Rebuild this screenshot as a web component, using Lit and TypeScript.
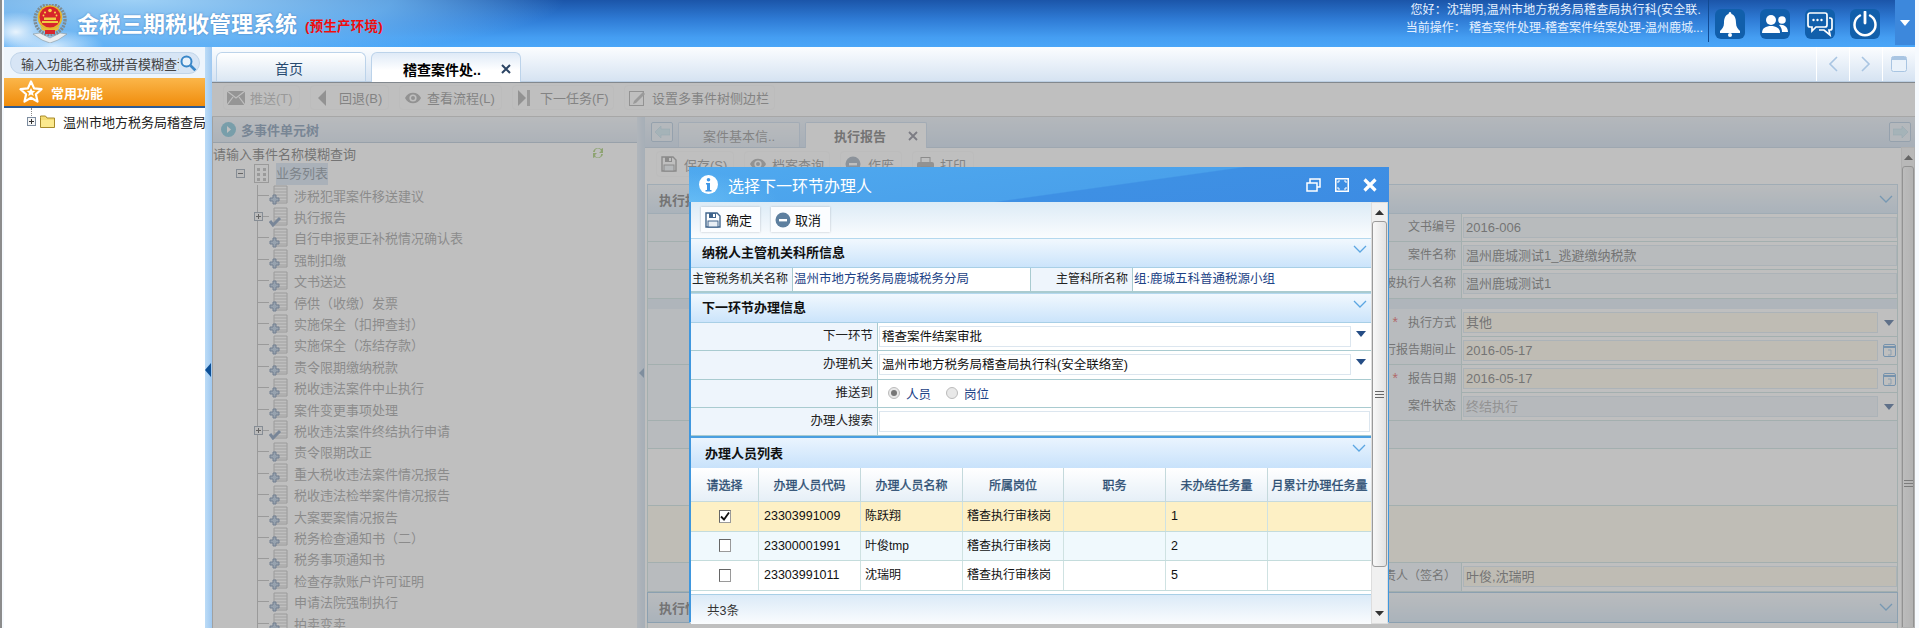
import { LitElement, html, css, svg } from "lit";
import { customElement } from "lit/decorators.js";

const treeItems: [string, boolean][] = [
  ["涉税犯罪案件移送建议", false],
  ["执行报告", true],
  ["自行申报更正补税情况确认表", false],
  ["强制扣缴", false],
  ["文书送达", false],
  ["停供（收缴）发票", false],
  ["实施保全（扣押查封）", false],
  ["实施保全（冻结存款）", false],
  ["责令限期缴纳税款", false],
  ["税收违法案件中止执行", false],
  ["案件变更事项处理", false],
  ["税收违法案件终结执行申请", true],
  ["责令限期改正", false],
  ["重大税收违法案件情况报告", false],
  ["税收违法检举案件情况报告", false],
  ["大案要案情况报告", false],
  ["税务检查通知书（二）", false],
  ["税务事项通知书", false],
  ["检查存款账户许可证明", false],
  ["申请法院强制执行", false],
  ["拍卖变卖", false],
];

const people = [
  ["23303991009", "陈跃翔", "稽查执行审核岗", "1", "sel"],
  ["23300001991", "叶俊tmp", "稽查执行审核岗", "2", "alt"],
  ["23303991011", "沈瑞明", "稽查执行审核岗", "5", ""],
];

const heads = ["请选择", "办理人员代码", "办理人员名称", "所属岗位", "职务", "未办结任务量", "月累计办理任务量"];

const chevron = (c = "#5ba6e2") => html`<svg class="chev" width="14" height="8" viewBox="0 0 14 8"><path d="M1 1l6 6 6-6" fill="none" stroke="${c}" stroke-width="1.3"/></svg>`;
const floppy = (c = "#41658c", s = 16) => html`<svg width="${s}" height="${s}" viewBox="0 0 16 16"><path d="M1 1h11l3 3v11H1z" fill="#fff" stroke="${c}" stroke-width="1.4"/><rect x="4" y="1" width="7" height="5" fill="${c}"/><rect x="8" y="2" width="2" height="3" fill="#fff"/><rect x="3" y="9" width="10" height="6" fill="#e8eef4" stroke="${c}"/></svg>`;
const minusCircle = (s = 16, c = "#5d7f9f") => html`<svg width="${s}" height="${s}" viewBox="0 0 16 16"><circle cx="8" cy="8" r="7.5" fill="${c}"/><rect x="4" y="7" width="8" height="2.4" fill="#fff"/></svg>`;
const eye = html`<svg width="18" height="14" viewBox="0 0 18 14"><path d="M1 7c3-7 13-7 16 0-3 7-13 7-16 0z" fill="#999"/><circle cx="9" cy="7" r="3.6" fill="#fff"/><circle cx="9" cy="7" r="2" fill="#999"/></svg>`;
const docIcon = (check: boolean) => html`<svg class="doc" width="20" height="20" viewBox="0 0 20 20">
  <path d="M5 1h13v17H5z" fill="#fff" stroke="#aaa"/>
  <path d="M5 4h13M5 7h13M5 10h13M5 13h13M5 16h13" stroke="#bbb"/>
  ${check
    ? svg`<path d="M1 14l3 4 7-7" fill="none" stroke="#5f7ea6" stroke-width="3"/>`
    : svg`<path d="M4 10h3v3h3v3H7v3H4v-3H1v-3h3z" fill="#a5bdd8" stroke="#4f6d94"/>`}
</svg>`;
const expander = (minus = false) => html`<svg width="9" height="9" viewBox="0 0 9 9"><rect x=".5" y=".5" width="8" height="8" fill="#f6f6f6" stroke="#7d8da0"/><path d="M2 4.500h5${minus ? "" : "M4.500 2v5"}" stroke="#333"/></svg>`;
const arrowBtn = (dir: "up" | "down") => html`<div class="sb-arrow"><svg width="9" height="5" viewBox="0 0 9 5"><path d="${dir === "up" ? "M0 5l4.500-5L9 5z" : "M0 0l4.500 5L9 0z"}" fill="#333"/></svg></div>`;
const grip = html`<svg width="9" height="7" viewBox="0 0 9 7"><path d="M0 .5h9M0 3.500h9M0 6.500h9" stroke="#666"/></svg>`;
const ddArrow = html`<svg width="10" height="6" viewBox="0 0 10 6"><path d="M0 0h10L5 6z" fill="#254d85"/></svg>`;
const calIcon = html`<svg width="13" height="14" viewBox="0 0 13 14"><rect x=".5" y="1.500" width="12" height="12" rx="1.500" fill="#fff" stroke="#5b9bd5"/><path d="M1 4h11" stroke="#5b9bd5" stroke-width="2"/><path d="M5 7h3v5H5" fill="none" stroke="#8fbbe0"/></svg>`;

const emblem = html`<svg width="36" height="39" viewBox="0 0 36 39">
  <path d="M1 30l7-1 10 5 10-5 7 1-9 6-8 3-8-3z" fill="#e8edf0" stroke="#8a979e" stroke-width=".6"/>
  <circle cx="18" cy="15.500" r="15" fill="none" stroke="#7f8b8f" stroke-width="3.400" stroke-dasharray="2 1"/>
  <circle cx="18" cy="13.500" r="12.300" fill="#e4b62c"/>
  <circle cx="18" cy="13" r="10.500" fill="#d7262b"/>
  <g fill="#f8d84a"><circle cx="18" cy="6.500" r="1.800"/><circle cx="13" cy="8.500" r="1"/><circle cx="23" cy="8.500" r="1"/><circle cx="11.500" cy="11.500" r=".9"/><circle cx="24.500" cy="11.500" r=".9"/></g>
  <path d="M10 17h16v2H10zM12 13.500h12v2.500H12z" fill="#f1cc45"/>
  <path d="M8 22c5 4 15 4 20 0l-2 4c-5 2-11 2-16 0z" fill="#e9bd33"/>
  <path d="M13 26h10v4H13z" fill="#d7262b"/>
</svg>`;

const star = html`<svg width="24" height="24" viewBox="0 0 24 24"><path d="M12 1.500l3.100 6.900 7.400.8-5.600 5 1.600 7.400L12 17.800l-6.500 3.800 1.600-7.400-5.600-5 7.400-.8z" fill="#f6a01e" stroke="#fff" stroke-width="2.200" stroke-linejoin="round"/><path d="M12 8l1.300 2.800 3 .3-2.300 2 .7 3L12 14.600 9.300 16l.7-3-2.300-2 3-.3z" fill="#fff"/></svg>`;
const folder = html`<svg width="15" height="13" viewBox="0 0 15 13"><path d="M.5 2.500V1h5l1.500 2h7.500v9.500h-14z" fill="#f5dc72" stroke="#a78a2a"/><path d="M1 5h13v7H1z" fill="#fbe98e"/></svg>`;
const search = html`<svg width="17" height="17" viewBox="0 0 17 17"><circle cx="6.500" cy="6.500" r="5" fill="#e8f1fa" stroke="#3a87c8" stroke-width="2"/><path d="M10.500 10.500l5 5" stroke="#3a87c8" stroke-width="2.600"/></svg>`;

const topIcons = [
  html`<svg width="22" height="26" viewBox="0 0 22 26"><path d="M11 1c1 0 1.400 1 1.400 2C16 4 17 8 17 12c0 4 2 6 4 8v2H1v-2c2-2 4-4 4-8 0-4 1-8 4.600-9C9.600 2 10 1 11 1z" fill="#fff"/><circle cx="11" cy="24" r="2" fill="#fff"/></svg>`,
  html`<svg width="26" height="20" viewBox="0 0 26 20"><circle cx="9" cy="6" r="5" fill="#fff"/><path d="M0 19c0-5 4-7 9-7s9 2 9 7z" fill="#fff"/><circle cx="20" cy="6" r="3.800" fill="#fff"/><path d="M17 11c5-1 9 2 9 7h-6c0-3-1-5-3-7z" fill="#fff"/></svg>`,
  html`<svg width="26" height="25" viewBox="0 0 26 25"><path d="M3 1h15a2 2 0 012 2v10a2 2 0 01-2 2H9l-4 4v-4H3a2 2 0 01-2-2V3a2 2 0 012-2z" fill="#115fab" stroke="#fff" stroke-width="1.700"/><path d="M22 6h1a2 2 0 012 2v8a2 2 0 01-2 2h-1l1 5-6-5h-5" fill="none" stroke="#fff" stroke-width="1.700"/><circle cx="6.500" cy="8" r="1.200" fill="#fff"/><circle cx="10.500" cy="8" r="1.200" fill="#fff"/><circle cx="14.500" cy="8" r="1.200" fill="#fff"/></svg>`,
  html`<svg width="26" height="26" viewBox="0 0 26 26"><path d="M8 4.500a10.500 10.500 0 1010 0" fill="none" stroke="#fff" stroke-width="2.500" stroke-linecap="round"/><path d="M13 1v11" stroke="#fff" stroke-width="2.800" stroke-linecap="round"/></svg>`,
];

const toolbarBtns = [
  [html`<svg width="18" height="14" viewBox="0 0 18 14"><rect width="18" height="14" fill="#a0a0a0"/><path d="M0 0l9 7 9-7M0 14l6-8M18 14l-6-8" fill="none" stroke="#fff" stroke-width="1.200"/></svg>`, "推送(T)", "b1"],
  [html`<svg width="12" height="16" viewBox="0 0 12 16"><path d="M10 0v16L2 8z" fill="#999"/></svg>`, "回退(B)", "b2"],
  [eye, "查看流程(L)", "b3"],
  [html`<svg width="14" height="16" viewBox="0 0 14 16"><path d="M1 0l8 8-8 8z" fill="#999"/><rect x="10" width="3" height="16" fill="#aaa"/></svg>`, "下一任务(F)", "b4"],
  [html`<svg width="18" height="16" viewBox="0 0 18 16"><rect x=".5" y="1.500" width="14" height="14" fill="#fff" stroke="#999"/><path d="M5 11l9-9 2 2-9 9-3 1z" fill="#aaa"/></svg>`, "设置多事件树侧边栏", "b5"],
];

@customElement("app-root")
export class AppRoot extends LitElement {
  static styles = css`
    :host {
      display: block;
      width: 1919px;
      height: 628px;
      overflow: hidden;
      font-family: "Liberation Sans", "Noto Sans CJK SC", sans-serif;
      font-size: 12px;
      color: #222;
      background: #f6fafe;
    }
    * { box-sizing: border-box; }
    .page {
      height: 628px;
      padding: 0 4px 0 4px;
      border-left: 2px solid #8c8c8c;
      display: flex;
      flex-direction: column;
    }
    .page > * { margin-left: -2px; }
    /* header */
    .header {
      height: 47px;
      flex: none;
      display: flex;
      align-items: stretch;
      color: #fff;
      background:
        radial-gradient(ellipse 34px 20px at 12px 32px, rgba(255,255,255,.85), transparent),
        radial-gradient(ellipse 50px 16px at 50px 46px, rgba(255,255,255,.7), transparent),
        radial-gradient(ellipse 430px 62px at 130px 0px, rgba(165,215,250,.95) 0, rgba(120,190,245,.75) 60%, transparent 100%),
        linear-gradient(#1b55a9 0, #2e7ad4 40%, #459ef2 80%, #4aa6f8 100%);
    }
    .emblem { margin: 4px 9px 0 28px; flex: none; }
    .title { font-size: 22px; font-weight: 700; line-height: 47px; margin-top: 1px; text-shadow: 0 0 2px rgba(20,70,140,.5); white-space: nowrap; }
    .env { font-size: 13.500px; color: #f10d0d; margin-left: 8px; line-height: 47px; margin-top: 3px; letter-spacing: .2px; font-weight: 700; }
    .user { margin-left: auto; text-align: right; padding: 0 5px 0 0; line-height: 18px; color: #e6f1ff; white-space: nowrap; font-size: 12px; }
    .user div:first-child { padding-top: 1px; letter-spacing: .15px; margin-right: 2px; }
    .user-sep { width: 1px; height: 42px; background: #114a92; margin-right: 6px; flex: none; }
    .ticons { display: flex; gap: 15px; padding-top: 9px; margin-right: 15px; }
    .ticon { width: 30px; height: 30px; border-radius: 6px; background: #115fab; display: flex; align-items: center; justify-content: center; }
    .tdrop { width: 20px; height: 45px; background: #3d88dc; display: flex; align-items: center; justify-content: center; }
    /* body */
    .main { flex: 1; display: flex; min-height: 0; }
    .side { width: 201px; flex: none; background: #fff; }
    .search-wrap { height: 31px; padding: 5px 5px 4px 6px; background: #eef5fc; }
    .search {
      height: 22px; border-radius: 11px; background: #d7e5f5; border: 1px solid #c1d5ea;
      display: flex; align-items: center; padding-left: 10px; overflow: hidden;
      font-size: 13px; color: #444; white-space: nowrap;
    }
    .search span { width: 158px; overflow: hidden; flex: none; }
    .search svg { flex: none; margin-left: 1px; }
    .common {
      height: 30px; background: linear-gradient(#fbb64a, #f08c0c); border-bottom: 2px solid #2e5b94;
      display: flex; align-items: center; padding-left: 15px; color: #fff; font-weight: 700; font-size: 13px;
    }
    .common svg { margin-right: 8px; }
    .stree { display: flex; align-items: center; padding: 0 0 0 23px; white-space: nowrap; overflow: hidden; font-size: 13px; height: 26px; }
    .stree .vline { align-self: flex-start; height: 8px; border-left: 1px dotted #888; margin-left: 4px; margin-right: -1px; }
    .stree .ex { margin-left: -4px; margin-right: 4px; display: flex; }
    .stree .fd { margin-right: 8px; display: flex; }
    .strip { width: 7px; flex: none; background: linear-gradient(90deg, #bcdcf7, #9fc8f0); display: flex; align-items: center; }
    .strip svg { margin-top: 64px; }
    .content { flex: 1; min-width: 0; display: flex; flex-direction: column; }
    /* tabs */
    .tabs {
      height: 35px; flex: none; display: flex; align-items: flex-end; padding-left: 4px; gap: 5px;
      background: linear-gradient(#fbfdff, #d6e3f2);
      border-bottom: 1px solid #bccfe3;
    }
    .tab {
      width: 150px; height: 29px; border: 1px solid #bcd3ea; border-bottom: 0; border-radius: 6px 6px 0 0;
      display: flex; align-items: center; justify-content: center; font-size: 14px; color: #274a70;
      background: linear-gradient(#fff, #dbe7f3); padding: 2px 4px 0 0;
    }
    .tab.on { background: linear-gradient(#dfeaf7, #fff 60%); color: #000; font-weight: 700; justify-content: flex-start; padding-left: 31px; height: 30px; margin-bottom: -1px; }
    .tab.on svg { margin-left: 20px; }
    .tab-tools { margin-left: auto; display: flex; height: 100%; }
    .tt { width: 33px; border-left: 1px solid #fff; display: flex; align-items: center; justify-content: center; }
    /* workspace */
    .work { position: relative; flex: 1; min-height: 0; display: flex; flex-direction: column; background: #fff; overflow: hidden; }
    .mask { position: absolute; inset: 0; background: rgba(140,140,140,.56); border-top: 1px solid rgba(90,100,110,.6); }
    .mtool { height: 35px; flex: none; display: flex; align-items: flex-start; padding: 4px 0 0 12px; gap: 12px; background: #fff; border-bottom: 1px solid #c8c8c8; }
    .btn { height: 23px; display: flex; align-items: center; padding-left: 3px; font-size: 13px; color: #777; border-radius: 3px; box-shadow: 0 0 2px rgba(120,120,120,.2); white-space: nowrap; flex: none; }
    .btn .ic { width: 23px; flex: none; display: flex; align-items: center; }
    .btn.b1 { width: 75px; color: #aaa; }
    .btn.b2 { width: 77px; padding-left: 5px; }
    .btn.b3 { width: 101px; padding-left: 4px; }
    .btn.b4 { width: 100px; padding-left: 4px; }
    .btn.b5 { width: 149px; padding-left: 4px; }
    .split { flex: 1; min-height: 0; display: flex; }
    .tp { width: 425px; flex: none; border-left: 1px solid #bbb; background: #fff; overflow: hidden; }
    .tp-head { height: 26px; background: linear-gradient(#f0f5fb, #d6e2f0); border-bottom: 1px solid #a7bbd0; display: flex; align-items: center; padding-left: 8px; gap: 5px; font-weight: 700; font-size: 13px; color: #5f7da0; }
    .tp-search { height: 20.500px; display: flex; align-items: center; font-size: 13px; color: #555; padding-right: 32px; justify-content: space-between; }
    .root-row { height: 20px; display: flex; align-items: center; padding-left: 23px; font-size: 13px; color: #777; }
    .root-row .rb { margin-right: 9px; display: flex; }
    .root-row .ri { margin-right: 7px; display: flex; }
    .root-row .sel { background: #cfe0f2; height: 22px; line-height: 22px; width: 52px; color: #6a7684; flex: none; }
    .tlist { margin: 1px 0 0 44px; border-left: 1px solid #aaa; }
    .ti { height: 21.400px; display: flex; align-items: center; font-size: 13px; color: #8a8a8a; white-space: nowrap; }
    .ti .conn { width: 11px; height: 1px; background: #aaa; display: flex; align-items: center; flex: none; }
    .ti .conn svg { margin-left: -4px; flex: none; }
    .ti .doc { margin-right: 5px; flex: none; }
    .splitter { width: 8px; flex: none; background: linear-gradient(90deg, #dde9f6, #c6d9ec); display: flex; align-items: center; justify-content: center; }
    .rp { flex: 1; min-width: 0; display: flex; flex-direction: column; background: #fff; }
    .rtabs { height: 31px; flex: none; display: flex; align-items: flex-end; gap: 5px; padding-left: 6px; background: linear-gradient(#e6eef7, #c8daee); border-bottom: 1px solid #b5c8dc; padding-right: 4px; }
    .back { width: 22px; height: 20px; border: 1px solid #9fbcd6; border-radius: 2px; margin-bottom: 5px; background: #e7f0f8; display: flex; align-items: center; justify-content: center; flex: none; }
    .back.fwd { margin-left: auto; }
    .rtab { width: 122px; height: 25px; border: 1px solid #bdd2e8; border-bottom: 0; border-radius: 2px 2px 0 0; background: linear-gradient(#f0f5fa, #d9e5f2); display: flex; align-items: center; justify-content: center; font-size: 13px; color: #777; }
    .rtab.on { background: #fff; height: 26px; margin-bottom: -1px; font-weight: 700; color: #555; gap: 22px; padding-left: 28px; justify-content: flex-start; }
    .rbody { flex: 1; min-height: 0; display: grid; grid-template-columns: 1fr 14px; column-gap: 3px; padding-left: 2px; }
    .rmain { min-width: 0; overflow: hidden; }
    .stool { height: 36px; display: flex; align-items: flex-start; gap: 12px; padding: 4px 0 0 10px; }
    .stool .btn { height: 24px; padding-left: 4px; }
    .stool .s1 { width: 76px; }
    .stool .s2 { width: 84px; }
    .stool .s3 { width: 60px; }
    .stool .s4 { width: 60px; }
    .fsec { height: 30px; border: 1px solid #b8d3e8; background: linear-gradient(#f2f7fc, #cfe3f5); display: flex; align-items: center; justify-content: space-between; padding: 0 4px 0 11px; font-weight: 700; font-size: 13px; color: #555; }
    .frow { height: 28.200px; display: grid; grid-template-columns: 814px 1fr; border: 1px solid #c0dadb; border-top: 0; background: #fff; }
    .frow .l { background: #eef5fc; border-right: 1px solid #c0dadb; text-align: right; padding-right: 5px; line-height: 27px; font-size: 12px; color: #555; white-space: nowrap; }
    .frow .v { padding: 3px 0 3px 1px; display: flex; align-items: center; gap: 3px; }
    .frow .box { flex: 1; height: 21px; line-height: 20px; padding-left: 2px; font-size: 13px; color: #555; background: #eef5fa; border: 1px solid #d4e4ee; white-space: nowrap; }
    .frow .box.req { background: #fff9e6; }
    .frow .box.dim { color: #9a9a9a; background: #eaf1f8; }
    .frow .tool { width: 16px; flex: none; display: flex; align-items: center; justify-content: center; }
    .req-star { color: #e13a3a; margin-right: 10px; font-size: 14px; }
    .band { height: 10px; background: #dbe8f5; border-left: 1px solid #c0dadb; border-right: 1px solid #c0dadb; }
    .fblank { border: 1px solid #c0dadb; border-top: 0; background: #eef5fc; height: 28px; }
    .fblank.t { height: 57px; background: #fff; }
    .fblank.tan { height: 57px; background: #fffaeb; }
    .fsec.second { height: 31px; border: 1px solid #8ab8de; }
    .sb { background: #f0f0f0; border: 1px solid #ddd; display: flex; flex-direction: column; min-height: 0; overflow: hidden; }
    .sb-arrow { height: 18px; flex: none; display: flex; align-items: center; justify-content: center; }
    .sb-thumb { background: linear-gradient(90deg, #f8f8f8, #e2e2e2); border: 1px solid #9a9a9a; border-radius: 3px; display: flex; align-items: center; justify-content: center; flex: none; }
    .sb-fill { flex: 1; }
    .sb.big .sb-thumb { height: 634px; }
    .sb.big { margin-top: -1px; }
    .sb.dlg .sb-thumb { height: 346px; }
    /* dialog */
    .dialog {
      position: absolute; left: 477px; top: 85px; width: 700px; height: 456px;
      display: flex; flex-direction: column; background: #fff;
      border-left: 2px solid #3f97de; border-right: 1px solid #3f97de;
      border-bottom: 1px solid #eef5fb;
    }
    .d-title {
      height: 35px; flex: none; margin: 0 -1px 0 -2px; display: flex; align-items: center; color: #fff;
      padding-left: 10px;
      background:
        radial-gradient(ellipse 90px 30px at 0 100%, rgba(120,205,250,.55), transparent),
        linear-gradient(172deg, #4fa9ef 0, #4aa1eb 58%, #3e90e4 59%, #3d8ce3 100%);
      font-size: 16px;
    }
    .d-title .t { margin-left: 10px; }
    .d-tools { margin-left: auto; display: flex; align-items: center; gap: 14px; padding-right: 12px; }
    .d-body { flex: 1; min-height: 0; display: grid; grid-template-columns: 680px 1fr; }
    .d-main { min-width: 0; }
    .d-tool { height: 36px; background: linear-gradient(#dcebf6, #fafcfe); display: flex; gap: 11px; padding: 5px 0 0 10px; }
    .d-btn { width: 59px; height: 25px; background: #fbfdff; box-shadow: 0 0 2px rgba(110,120,130,.45); display: flex; align-items: center; gap: 5px; padding-left: 4px; font-size: 13px; color: #111; }
    .d-btn.c { gap: 4px; }
    .d-sec { height: 30px; border-top: 1px solid #b4d8ee; border-bottom: 1px solid #a8cfe6; background: linear-gradient(#f1f8fe, #cbe4fb); display: flex; align-items: center; justify-content: space-between; padding: 0 4px 3px 11px; font-weight: 700; font-size: 13px; color: #111; }
    .d-sec .chev { margin-top: -6px; }
    .d-row1 { height: 25px; display: grid; grid-template-columns: 102px 238px 102px 1fr; border-bottom: 2px solid #a9cbd0; font-size: 12px; }
    .d-row1 div { border-right: 1px solid #a9cbd0; line-height: 23px; white-space: nowrap; overflow: hidden; }
    .d-row1 div:last-child { border-right: 0; }
    .d-row1 .l { background: #eef5fc; text-align: right; padding-right: 4px; color: #222; }
    .d-row1 .v { color: #1c4286; padding-left: 1px; font-size: 12.500px; }
    .d-row { height: 28.300px; display: grid; grid-template-columns: 187px 1fr; border-bottom: 1px solid #a9cbd0; }
    .d-row .l { background: #eef5fc; border-right: 1px solid #a9cbd0; text-align: right; padding-right: 4px; line-height: 27px; font-size: 12.500px; color: #222; }
    .d-row .v { padding: 3px 1px; display: flex; align-items: center; }
    .d-row .inp { flex: 1; height: 21px; line-height: 20px; border: 1px solid #dce6ef; padding-left: 2px; font-size: 12.500px; color: #111; background: #fff; }
    .d-row .dd { width: 19px; flex: none; display: flex; justify-content: center; margin-top: -6px; }
    .radios { display: flex; align-items: center; gap: 6px; padding-left: 9px; color: #1c4286; font-size: 12.500px; }
    .radios .gap { margin-left: 9px; }
    .radio { width: 12px; height: 12px; border-radius: 50%; background: #e8e8e8; border: 1px solid #bbb; display: flex; align-items: center; justify-content: center; flex: none; }
    .radio i { width: 6px; height: 6px; border-radius: 50%; background: #777; }
    .list-sec { height: 32px; border-top: 2px solid #4a9fe0; background: linear-gradient(#eaf4fe, #c8e2fb); display: flex; align-items: center; justify-content: space-between; padding: 0 5px 2px 14px; font-weight: 700; font-size: 13px; color: #111; }
    .list-sec .chev { margin-top: -8px; }
    .grid-head, .grid-row { display: grid; grid-template-columns: 68px 102px 102px 101px 102px 102px 103px; }
    .grid-head { height: 34px; background: linear-gradient(#fff, #e6eff7); border-bottom: 1px solid #c6dadd; }
    .grid-head div { border-right: 1px solid #c4d9dc; display: flex; align-items: center; justify-content: center; color: #2b4d72; font-size: 12px; -webkit-text-stroke: .3px #2b4d72; white-space: nowrap; overflow: hidden; }
    .grid-head div:last-child { border-right: 0; }
    .grid-row { height: 29.500px; border-bottom: 1px solid #c4dcdc; background: #fff; }
    .grid-row.sel { background: #fdf0c5; }
    .grid-row.alt { background: #f0f9fd; }
    .grid-row div { border-right: 1px solid #cfe2e2; line-height: 28px; padding-left: 4px; font-size: 12px; color: #111; white-space: nowrap; }
    .grid-row div:last-child { border-right: 0; }
    .grid-row .code { font-size: 12.500px; padding-left: 5px; }
    .grid-row .chk { padding: 0; display: flex; align-items: center; justify-content: center; }
    .check { width: 12px; height: 13px; background: #fff; border: 1px solid #9a9a9a; border-top-color: #666; border-left-color: #666; display: flex; align-items: center; justify-content: center; }
    .d-foot { height: 30px; margin-top: 3px; background: linear-gradient(#dbeaf7, #fafcfe); border-top: 1px solid #a8cfe6; padding: 9px 0 0 16px; font-size: 12.500px; color: #333; line-height: 14px; }
  `;

  private dRow(label: string, body: unknown) {
    return html`<div class="d-row"><div class="l">${label}</div><div class="v">${body}</div></div>`;
  }

  private fRow(label: string, value: string, kind = "", tool: unknown = null, star = false) {
    return html`<div class="frow"><div class="l">${star ? html`<span class="req-star">*</span>` : ""}${label}</div>
      <div class="v"><div class="box ${kind}">${value}</div>${tool ? html`<span class="tool">${tool}</span>` : ""}</div></div>`;
  }

  render() {
    return html`
      <div class="page">
        <div class="header">
          <div class="emblem">${emblem}</div>
          <div class="title">金税三期税收管理系统</div>
          <div class="env">(预生产环境)</div>
          <div class="user">
            <div>您好：沈瑞明,温州市地方税务局稽查局执行科(安全联.</div>
            <div>当前操作： 稽查案件处理-稽查案件结案处理-温州鹿城...</div>
          </div>
          <div class="user-sep"></div>
          <div class="ticons">${topIcons.map((i) => html`<div class="ticon">${i}</div>`)}</div>
          <div class="tdrop"><svg width="10" height="6" viewBox="0 0 10 6"><path d="M0 0h10L5 6z" fill="#fff"/></svg></div>
        </div>
        <div class="main">
          <div class="side">
            <div class="search-wrap"><div class="search"><span>输入功能名称或拼音模糊查询</span>${search}</div></div>
            <div class="common">${star}常用功能</div>
            <div class="stree"><span class="vline"></span><span class="ex">${expander()}</span><span class="fd">${folder}</span>温州市地方税务局稽查局</div>
          </div>
          <div class="strip"><svg width="6" height="14" viewBox="0 0 6 14"><path d="M6 0v14L0 7z" fill="#0c4f96"/></svg></div>
          <div class="content">
            <div class="tabs">
              <div class="tab">首页</div>
              <div class="tab on">稽查案件处..<svg width="10" height="10" viewBox="0 0 10 10"><path d="M1 1l8 8M9 1l-8 8" stroke="#2b4464" stroke-width="2"/></svg></div>
              <div class="tab-tools">
                <div class="tt"><svg width="10" height="16" viewBox="0 0 10 16"><path d="M9 1L2 8l7 7" fill="none" stroke="#a9c5e2" stroke-width="1.600"/></svg></div>
                <div class="tt"><svg width="10" height="16" viewBox="0 0 10 16"><path d="M1 1l7 7-7 7" fill="none" stroke="#a9c5e2" stroke-width="1.600"/></svg></div>
                <div class="tt"><svg width="16" height="16" viewBox="0 0 16 16"><rect x=".5" y=".5" width="15" height="15" rx="2" fill="#eaf2fa" stroke="#a9c5e2"/><rect x="1" y="1" width="14" height="3" fill="#a9c5e2"/></svg></div>
              </div>
            </div>
            <div class="work">
              <div class="mtool">${toolbarBtns.map((b) => html`<div class="btn ${b[2]}"><span class="ic">${b[0]}</span><span>${b[1]}</span></div>`)}</div>
              <div class="split">
                <div class="tp">
                  <div class="tp-head"><svg width="15" height="15" viewBox="0 0 15 15"><circle cx="7.500" cy="7.500" r="7.500" fill="#5fb3cf"/><path d="M6 4l4 3.500L6 11z" fill="#fff"/></svg>多事件单元树</div>
                  <div class="tp-search">请输入事件名称模糊查询<svg width="14" height="14" viewBox="0 0 14 14"><path d="M2 6a5 5 0 018-3l2-1v5H8l2-2a3 3 0 00-6 1zM12 8a5 5 0 01-8 3l-2 1V7h4L4 9a3 3 0 006-1z" fill="#8fc050"/></svg></div>
                  <div class="root-row"><span class="rb">${expander(true)}</span><span class="ri"><svg width="15" height="19" viewBox="0 0 15 19"><rect x=".5" y=".5" width="14" height="18" fill="#fff" stroke="#aaa"/><path d="M3 4h3v3H3zM9 4h3v3H9zM3 9h3v3H3zM9 9h3v3H9zM3 14h3v3H3zM9 14h3v3H9z" fill="#aaa"/></svg></span><span class="sel">业务列表</span></div>
                  <div class="tlist">
                    ${treeItems.map(([t, chk]) => html`<div class="ti"><span class="conn">${chk ? expander() : ""}</span>${docIcon(chk)}<span>${t}</span></div>`)}
                  </div>
                </div>
                <div class="splitter"><svg width="5" height="10" viewBox="0 0 5 10"><path d="M5 0v10L0 5z" fill="#6d8fb5"/></svg></div>
                <div class="rp">
                  <div class="rtabs">
                    <div class="back"><svg width="15" height="12" viewBox="0 0 15 12"><path d="M0 6l6-6v3h9v6H6v3z" fill="#c4e4ee" stroke="#a8cce0" stroke-width=".6"/></svg></div>
                    <div class="rtab">案件基本信..</div>
                    <div class="rtab on">执行报告<svg width="10" height="10" viewBox="0 0 10 10"><path d="M1 1l8 8M9 1l-8 8" stroke="#667" stroke-width="1.800"/></svg></div>
                    <div class="back fwd"><svg width="15" height="12" viewBox="0 0 15 12"><path d="M15 6L9 0v3H0v6h9v3z" fill="#c4e4ee" stroke="#a8cce0" stroke-width=".6"/></svg></div>
                  </div>
                  <div class="rbody">
                    <div class="rmain">
                      <div class="stool">
                        <div class="btn s1"><span class="ic">${floppy("#888", 16)}</span><span>保存(S)</span></div>
                        <div class="btn s2"><span class="ic">${eye}</span><span>档案查询</span></div>
                        <div class="btn s3"><span class="ic">${minusCircle(16, "#8a9aac")}</span><span>作废</span></div>
                        <div class="btn s4"><span class="ic"><svg width="17" height="15" viewBox="0 0 17 15"><rect x="4" y=".5" width="9" height="5" fill="#fff" stroke="#888"/><rect y="5" width="17" height="8" rx="2" fill="#999"/><rect x="4" y="10" width="9" height="5" fill="#fff" stroke="#888"/></svg></span><span>打印</span></div>
                      </div>
                      <div class="fsec"><span>执行报告</span>${chevron()}</div>
                      ${this.fRow("文书编号", "2016-006")}
                      ${this.fRow("案件名称", "温州鹿城测试1_逃避缴纳税款")}
                      ${this.fRow("被执行人名称", "温州鹿城测试1")}
                      <div class="band"></div>
                      ${this.fRow("执行方式", "其他", "req", ddArrow, true)}
                      ${this.fRow("执行报告期间止", "2016-05-17", "req", calIcon)}
                      ${this.fRow("报告日期", "2016-05-17", "req", calIcon, true)}
                      ${this.fRow("案件状态", "终结执行", "dim", ddArrow)}
                      <div class="fblank"></div>
                      <div class="fblank t"></div>
                      <div class="fblank tan"></div>
                      ${this.fRow("负责人（签名）", "叶俊,沈瑞明", "req")}
                      <div class="fsec second"><span>执行情况</span>${chevron()}</div>
                      <div class="frow"></div>
                    </div>
                    <div class="sb big">${arrowBtn("up")}<div class="sb-thumb">${grip}</div></div>
                  </div>
                </div>
              </div>
              <div class="mask"></div>
              <div class="dialog">
                <div class="d-title">
                  <svg width="19" height="19" viewBox="0 0 19 19"><circle cx="9.500" cy="9.500" r="9.500" fill="#fff"/><circle cx="9.500" cy="4.800" r="1.800" fill="#3f97e6"/><path d="M7 8h4v7h1.500v1.500h-6V15H8V9.500H7z" fill="#3f97e6"/></svg>
                  <span class="t">选择下一环节办理人</span>
                  <div class="d-tools">
                    <svg width="15" height="14" viewBox="0 0 15 14"><rect x="4" y="1" width="10" height="8" fill="none" stroke="#fff" stroke-width="1.500"/><rect x="1" y="5" width="10" height="8" fill="#3f90e4" stroke="#fff" stroke-width="1.500"/></svg>
                    <svg width="14" height="14" viewBox="0 0 14 14"><rect x=".75" y=".75" width="12.500" height="12.500" fill="none" stroke="#fff" stroke-width="1.500"/><path d="M3 5V3h2M9 3h2v2M11 9v2H9M5 11H3V9" fill="none" stroke="#fff"/></svg>
                    <svg width="14" height="14" viewBox="0 0 14 14"><path d="M1.500 1.500l11 11M12.500 1.500l-11 11" stroke="#fff" stroke-width="3.200"/></svg>
                  </div>
                </div>
                <div class="d-body">
                  <div class="d-main">
                    <div class="d-tool">
                      <div class="d-btn">${floppy()}确定</div>
                      <div class="d-btn c">${minusCircle()}取消</div>
                    </div>
                    <div class="d-sec"><span>纳税人主管机关科所信息</span>${chevron()}</div>
                    <div class="d-row1">
                      <div class="l">主管税务机关名称</div>
                      <div class="v">温州市地方税务局鹿城税务分局</div>
                      <div class="l">主管科所名称</div>
                      <div class="v">组:鹿城五科普通税源小组</div>
                    </div>
                    <div class="d-sec"><span>下一环节办理信息</span>${chevron()}</div>
                    ${this.dRow("下一环节", html`<div class="inp">稽查案件结案审批</div><span class="dd">${ddArrow}</span>`)}
                    ${this.dRow("办理机关", html`<div class="inp">温州市地方税务局稽查局执行科(安全联络室)</div><span class="dd">${ddArrow}</span>`)}
                    ${this.dRow("推送到", html`<div class="radios"><span class="radio"><i></i></span><span>人员</span><span class="radio gap"></span><span>岗位</span></div>`)}
                    ${this.dRow("办理人搜索", html`<div class="inp"></div>`)}
                    <div class="list-sec"><span>办理人员列表</span>${chevron()}</div>
                    <div class="grid-head">${heads.map((h) => html`<div>${h}</div>`)}</div>
                    ${people.map((p) => html`<div class="grid-row ${p[4]}">
                      <div class="chk"><span class="check">${p[4] === "sel" ? html`<svg width="10" height="9" viewBox="0 0 10 9"><path d="M1 4.500l3 3 5-7" fill="none" stroke="#111" stroke-width="1.800"/></svg>` : ""}</span></div>
                      <div class="code">${p[0]}</div><div>${p[1]}</div><div>${p[2]}</div><div></div><div class="code">${p[3]}</div><div></div>
                    </div>`)}
                    <div class="d-foot">共3条</div>
                  </div>
                  <div class="sb dlg">${arrowBtn("up")}<div class="sb-thumb">${grip}</div><div class="sb-fill"></div>${arrowBtn("down")}</div>
                </div>
              </div>
            </div>
          </div>
        </div>
      </div>
    `;
  }
}
